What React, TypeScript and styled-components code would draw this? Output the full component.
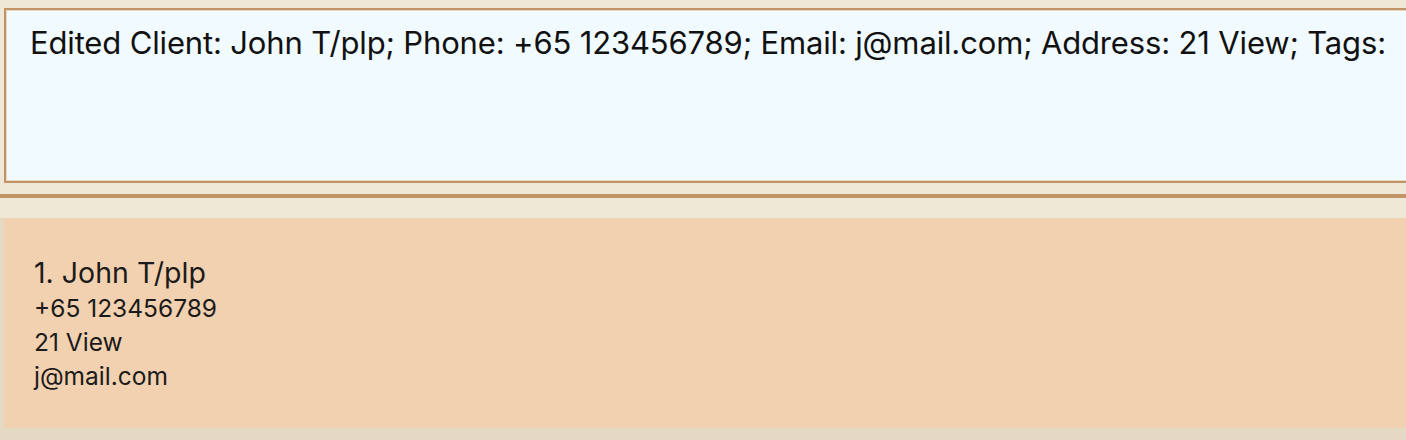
import styled, { createGlobalStyle } from "styled-components";

const GlobalStyle = createGlobalStyle`
  html, body {
    margin: 0;
    padding: 0;
    background: #f0e8d6;
    overflow: hidden;
  }
  body {
    font-family: Inter, "Noto Sans", sans-serif;
    color: #1b1b1b;
  }
`;

const Page = styled.div`
  width: 1406px;
  height: 440px;
  overflow: hidden;
  display: flex;
  flex-direction: column;
`;

const ResultPane = styled.div`
  margin: 8px 0 0 4px;
  width: 1420px;
  height: 175px;
  box-sizing: border-box;
  border: 2px solid #c19468;
  box-shadow: inset 0 0 0 1px #ead8bd;
  background: #f0faff;
  padding: 15px 24px;
`;

const ResultText = styled.div`
  font-size: 31px;
  letter-spacing: -0.15px;
  line-height: 36px;
  color: #111;
  white-space: nowrap;
`;

const Divider = styled.div`
  margin-top: 11px;
  height: 4px;
  background: #c19468;
`;

const ListArea = styled.div`
  margin-top: 20px;
  flex: 1;
  display: flex;
  flex-direction: column;
  background: #e4dac4;
`;

const ClientCard = styled.div`
  margin-left: 4px;
  height: 210px;
  box-sizing: border-box;
  background: #f2d1b0;
  padding: 37px 30px;
  display: flex;
  flex-direction: column;
`;

const Name = styled.div`
  font-size: 28.5px;
  line-height: 36px;
`;

const Detail = styled.div`
  font-size: 24.5px;
  line-height: 34px;
`;

export default function App() {
  return (
    <Page>
      <GlobalStyle />
      <ResultPane>
        <ResultText>
          Edited Client: John T/plp; Phone: +65 123456789; Email: j@mail.com; Address: 21 View; Tags:
        </ResultText>
      </ResultPane>
      <Divider />
      <ListArea>
        <ClientCard>
          <Name>1. John T/plp</Name>
          <Detail>+65 123456789</Detail>
          <Detail>21 View</Detail>
          <Detail>j@mail.com</Detail>
        </ClientCard>
      </ListArea>
    </Page>
  );
}
